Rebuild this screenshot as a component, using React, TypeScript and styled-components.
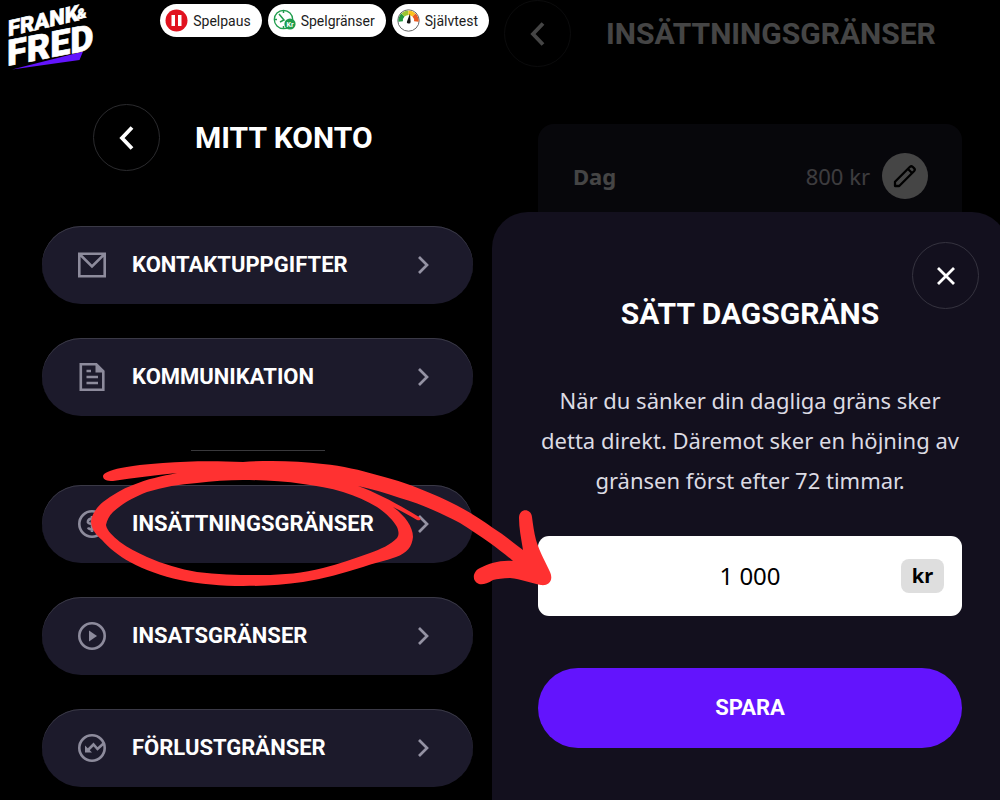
import React from "react";
import styled, { createGlobalStyle } from "styled-components";

const GlobalStyle = createGlobalStyle`
  *, *::before, *::after { box-sizing: border-box; }
  html, body, #root { height: 100%; }
  body {
    margin: 0;
    background: #000;
    color: #fff;
    font-family: "Noto Sans", "Open Sans", sans-serif;
  }
  button, input { font: inherit; color: inherit; }
  button { border: 0; padding: 0; background: none; cursor: pointer; }
  h1, h2, p { margin: 0; }
  svg { display: block; flex: none; }
`;

const Page = styled.div`
  position: relative;
  display: grid;
  grid-template-columns: 492fr 508fr;
  min-height: 100%;
  overflow: hidden;
`;

const Account = styled.main`
  display: flex;
  flex-direction: column;
  padding: 4px 3px 13px 6px;
`;

const TopBar = styled.header`
  display: flex;
  justify-content: space-between;
  align-items: flex-start;
  height: 67px;
`;

const Pills = styled.nav`
  display: flex;
  gap: 6px;
`;

const Pill = styled.a`
  display: flex;
  align-items: center;
  gap: 5px;
  height: 33px;
  padding: 0 11px 0 5px;
  border-radius: 17px;
  background: #fff;
  color: #1c1c1c;
  font-family: Roboto, sans-serif;
  font-size: 14px;
  line-height: 20px;
  text-decoration: none;
`;

const Heading = styled.div`
  display: flex;
  align-items: center;
  gap: 35px;
`;

const AccountHeading = styled(Heading)`
  padding: 33px 0 0 87px;
`;

const RoundButton = styled.button`
  display: flex;
  align-items: center;
  justify-content: center;
  width: 67px;
  height: 67px;
  border: 1px solid #2b2b2e;
  border-radius: 50%;
`;

const Title = styled.h1`
  font-family: Roboto, sans-serif;
  font-size: 30px;
  font-weight: 700;
  line-height: 40px;
  text-transform: uppercase;
`;

const Menu = styled.nav`
  display: flex;
  flex-direction: column;
  gap: 34px;
  padding: 55px 16px 0 36px;
`;

const MenuItem = styled.button`
  display: flex;
  align-items: center;
  gap: 24px;
  height: 78px;
  padding: 0 42px 0 34px;
  border-radius: 39px;
  background: #1c1a2b;
  box-shadow: inset 0 1px 0 #3a3946;
  text-align: left;
`;

const MenuLabel = styled.span`
  flex: 1;
  font-family: Roboto, sans-serif;
  font-size: 22px;
  font-weight: 700;
  line-height: 32px;
  text-transform: uppercase;
`;

const Divider = styled.hr`
  align-self: center;
  width: 134px;
  height: 1px;
  margin: 0;
  border: 0;
  background: #39393c;
`;

const Limits = styled.section`
  position: relative;
  margin-right: -8px;
`;

const LimitsHeading = styled(Heading)`
  padding-left: 12px;
`;

const LimitCard = styled.div`
  display: flex;
  align-items: center;
  gap: 12px;
  height: 104px;
  margin: 57px 46px 0;
  padding: 0 34px 0 35px;
  border-radius: 16px;
  background: #1c1a2b;
  font-size: 22px;
  line-height: 32px;
`;

const LimitName = styled.strong`
  flex: 1;
`;

const LimitValue = styled.span`
  color: #e0dfe6;
`;

const EditButton = styled.button`
  display: flex;
  align-items: center;
  justify-content: center;
  width: 46px;
  height: 46px;
  border-radius: 50%;
  background: #fff;
  color: #000;
`;

const Scrim = styled.div`
  position: absolute;
  inset: 0;
  display: flex;
  flex-direction: column;
  padding-top: 212px;
  background: rgba(0, 0, 0, 0.73);
`;

const Sheet = styled.form`
  position: relative;
  flex: 1;
  display: flex;
  flex-direction: column;
  padding: 82px 46px 52px;
  border-radius: 36px 36px 0 0;
  background: #13101e;
  text-align: center;
`;

const CloseButton = styled(RoundButton)`
  position: absolute;
  top: 30px;
  right: 29px;
  border-color: #35333f;
`;

const SheetText = styled.p`
  margin-top: 46px;
  color: #dcdbe3;
  font-size: 22px;
  line-height: 40px;
`;

const Field = styled.label`
  display: flex;
  align-items: center;
  height: 80px;
  margin-top: 36px;
  padding: 0 18px;
  border-radius: 11px;
  background: #fff;
  color: #000;
`;

const Amount = styled.input`
  flex: 1;
  min-width: 0;
  padding: 0 0 0 43px;
  border: 0;
  outline: 0;
  background: none;
  font-size: 24px;
  line-height: 32px;
  text-align: center;
`;

const Currency = styled.span`
  width: 43px;
  border-radius: 8px;
  background: #dedede;
  font-size: 20px;
  font-weight: 700;
  line-height: 34px;
`;

const SaveButton = styled.button`
  height: 80px;
  margin-top: 52px;
  border-radius: 40px;
  background: #6314fd;
  font-family: Roboto, sans-serif;
  font-size: 22px;
  font-weight: 700;
  line-height: 32px;
  text-transform: uppercase;
`;

const Annotation = styled.svg`
  position: absolute;
  top: 0;
  left: 0;
  pointer-events: none;
`;

const LogoMark = styled.svg`
  overflow: visible;
`;

const LogoText = styled.text`
  font-family: Roboto, sans-serif;
  font-weight: 900;
  fill: #fff;
  stroke: #fff;
  stroke-width: 0.6px;
`;

const Logo = () => (
  <LogoMark width="92" height="70" viewBox="6 4 92 70" role="img" aria-label="Frank & Fred">
    <path d="M12 69.500L83 51.500L79.500 60Z" fill="#6314fd" />
    <g transform="translate(8 36.500) skewY(-13)">
      <LogoText fontSize="22">FRANK</LogoText>
      <LogoText x="69" y="-1" fontSize="14">&amp;</LogoText>
    </g>
    <g transform="translate(7 66) skewY(-11)">
      <LogoText fontSize="36">FRED</LogoText>
    </g>
  </LogoMark>
);

const PauseIcon = () => (
  <svg width="23" height="23" viewBox="0 0 23 23">
    <circle cx="11.500" cy="11.500" r="11" fill="#e1121f" />
    <path d="M6.500 6h3.500v11h-3.500zM13 6h3.500v11h-3.500z" fill="#fff" />
  </svg>
);

const ClockIcon = () => (
  <svg width="23" height="23" viewBox="0 0 23 23">
    <circle cx="10.500" cy="10.500" r="9.200" fill="#fff" stroke="#1f9d4d" strokeWidth="1.300" />
    <path d="M10.500 2v2M10.500 17v2M2 10.500h2M6 5l5 6-4 2" fill="none" stroke="#1f9d4d" strokeWidth="1.500" />
    <circle cx="17" cy="15" r="5.600" fill="#1f9d4d" />
    <text x="17" y="17.500" textAnchor="middle" fontSize="7" fontWeight="700" fill="#fff" fontFamily="Roboto, sans-serif">Kr</text>
  </svg>
);

const GaugeIcon = () => (
  <svg width="23" height="23" viewBox="0 0 23 23">
    <circle cx="11.500" cy="11.500" r="10.700" fill="#fff" stroke="#666" strokeWidth="1" />
    <g fill="none" strokeWidth="4.500">
      <path d="M3.700 12.500A7.800 7.800 0 0 1 6 6" stroke="#23983f" />
      <path d="M6 6A7.800 7.800 0 0 1 11.500 3.700" stroke="#9cc532" />
      <path d="M11.500 3.700A7.800 7.800 0 0 1 17 6" stroke="#fbc21c" />
      <path d="M17 6A7.800 7.800 0 0 1 19.300 12.500" stroke="#ea5b22" />
    </g>
    <path d="M13 4.500l.6 8.200a1.800 1.800 0 1 1-3.400-.8z" fill="#111" />
  </svg>
);

const BackIcon = () => (
  <svg width="24" height="28" viewBox="0 0 24 28" fill="none" stroke="#fff" strokeWidth="3.800">
    <path d="M17 3.500L7 14l10 10.500" />
  </svg>
);

const CloseIcon = () => (
  <svg width="20" height="20" viewBox="0 0 20 20" fill="none" stroke="#fff" strokeWidth="2.800">
    <path d="M2 2l16 16M18 2L2 18" />
  </svg>
);

const ChevronIcon = () => (
  <svg width="16" height="20" viewBox="0 0 16 20" fill="none" stroke="#9492a3" strokeWidth="2.700">
    <path d="M4 2l8 8-8 8" />
  </svg>
);

const PencilIcon = () => (
  <svg width="24" height="24" viewBox="0 0 24 24" fill="none" stroke="currentColor" strokeWidth="2.300" strokeLinejoin="round">
    <path d="M2 22v-4.200L17 2.800q1.300-1.200 2.600 0l1.600 1.600q1.200 1.300 0 2.600L6.200 22zM15 5l4 4" />
  </svg>
);

const ItemIcon = ({ children }: { children: React.ReactNode }) => (
  <svg width="32" height="32" viewBox="0 0 32 32" fill="none" stroke="#8d8b9c" strokeWidth="2.600">
    {children}
  </svg>
);

const icons = {
  mail: (
    <ItemIcon>
      <path d="M3.300 4.800h25.400v22.400H3.300zM4 5.500l12 12 12-12" />
    </ItemIcon>
  ),
  document: (
    <ItemIcon>
      <path d="M4.800 3.300h15.500l7 7v18.400H4.800zM10.500 10h4.500M10.500 16h11.500M10.500 22h11.500" />
      <path d="M19.500 3l8.500 8.500h-8.500z" fill="#8d8b9c" stroke="none" />
    </ItemIcon>
  ),
  coin: (
    <ItemIcon>
      <circle cx="16" cy="16" r="12.700" />
      <path d="M20 12.500q-1-2-4-2t-4 2.500 4 3 4 3-4 2.500-4-2M16 8v16" />
    </ItemIcon>
  ),
  play: (
    <ItemIcon>
      <circle cx="16" cy="16" r="12.700" />
      <path d="M13 10.500l8 5.500-8 5.500z" fill="#8d8b9c" stroke="none" />
    </ItemIcon>
  ),
  trend: (
    <ItemIcon>
      <circle cx="16" cy="16" r="12.700" />
      <path d="M27.500 11.500l-6 5.500-4-4.500-6.500 6.500" />
      <path d="M9 13.500v7h7z" fill="#8d8b9c" stroke="none" />
    </ItemIcon>
  ),
};

const Item = ({ icon, label }: { icon: keyof typeof icons; label: string }) => (
  <MenuItem type="button">
    {icons[icon]}
    <MenuLabel>{label}</MenuLabel>
    <ChevronIcon />
  </MenuItem>
);

const Arrow = () => (
  <Annotation width="560" height="600" viewBox="0 0 560 600" aria-hidden="true">
    <path
      fill="#ff3131"
      fillRule="evenodd"
      d="M103 476C104 470 130 465 163 463C190 461 215 461 243 462C270 460 298 461 323 464C343 466 360 470 377 475C397 480 414 486 430 493C455 503 475 515 493 528C504 535 514 543 523 550C521 538 519 528 519 518C519 508 531 508 532 517C533 525 534 532 536 540C540 553 546 563 550 572C554 581 548 586 541 585C531 583 521 579 510 578C503 578 497 579 493 580C487 584 482 585 479 584C471 581 473 571 480 568C490 563 500 560 513 561C506 555 498 549 490 543C480 536 470 529 460 523C451 518 442 514 433 510C422 505 411 501 400 498C386 493 372 489 358 486C378 493 401 506 419 517C422 519 420 521 417 520C409 515 401 511 393 507C404 515 413 526 413 537C412 547 407 553 396 557C385 561 374 563 363 567C343 573 323 579 303 582C283 585 263 586 243 586C222 586 200 584 180 580C162 576 145 570 130 562C119 556 109 548 102 540C95 534 91 528 91 521C92 514 97 507 103 502C112 495 122 489 133 485C147 479 162 476 177 473C155 475 133 478 113 481C107 481 103 480 103 476ZM106 525C107 520 109 516 113 512C123 503 134 497 147 492C163 487 180 484 197 483C212 481 228 480 243 480C263 480 283 481 303 484C317 486 330 488 343 492C356 496 367 501 377 507C386 513 393 520 397 527C399 532 399 535 397 538C390 545 381 549 370 553C355 558 339 564 323 568C303 573 283 575 263 575C241 575 219 575 197 572C180 569 163 564 147 557C137 552 128 548 120 542C113 536 107 531 106 525Z"
    />
  </Annotation>
);

export default function App() {
  return (
    <>
      <GlobalStyle />
      <Page>
        <Account>
          <TopBar>
            <Logo />
            <Pills aria-label="Spelansvar">
              <Pill href="#spelpaus"><PauseIcon />Spelpaus</Pill>
              <Pill href="#spelgranser"><ClockIcon />Spelgränser</Pill>
              <Pill href="#sjalvtest"><GaugeIcon />Självtest</Pill>
            </Pills>
          </TopBar>
          <AccountHeading>
            <RoundButton type="button" aria-label="Tillbaka"><BackIcon /></RoundButton>
            <Title>Mitt konto</Title>
          </AccountHeading>
          <Menu aria-label="Mitt konto">
            <Item icon="mail" label="Kontaktuppgifter" />
            <Item icon="document" label="Kommunikation" />
            <Divider />
            <Item icon="coin" label="Insättningsgränser" />
            <Item icon="play" label="Insatsgränser" />
            <Item icon="trend" label="Förlustgränser" />
          </Menu>
        </Account>
        <Limits>
          <LimitsHeading>
            <RoundButton type="button" aria-label="Tillbaka"><BackIcon /></RoundButton>
            <Title>Insättningsgränser</Title>
          </LimitsHeading>
          <LimitCard>
            <LimitName>Dag</LimitName>
            <LimitValue>800 kr</LimitValue>
            <EditButton type="button" aria-label="Ändra"><PencilIcon /></EditButton>
          </LimitCard>
          <Scrim>
            <Sheet onSubmit={(event) => event.preventDefault()}>
              <CloseButton type="button" aria-label="Stäng"><CloseIcon /></CloseButton>
              <Title as="h2">Sätt dagsgräns</Title>
              <SheetText>
                När du sänker din dagliga gräns sker detta direkt. Däremot sker en höjning av gränsen först efter 72 timmar.
              </SheetText>
              <Field>
                <Amount defaultValue="1 000" inputMode="numeric" aria-label="Dagsgräns" />
                <Currency>kr</Currency>
              </Field>
              <SaveButton type="submit">Spara</SaveButton>
            </Sheet>
          </Scrim>
        </Limits>
        <Arrow />
      </Page>
    </>
  );
}
